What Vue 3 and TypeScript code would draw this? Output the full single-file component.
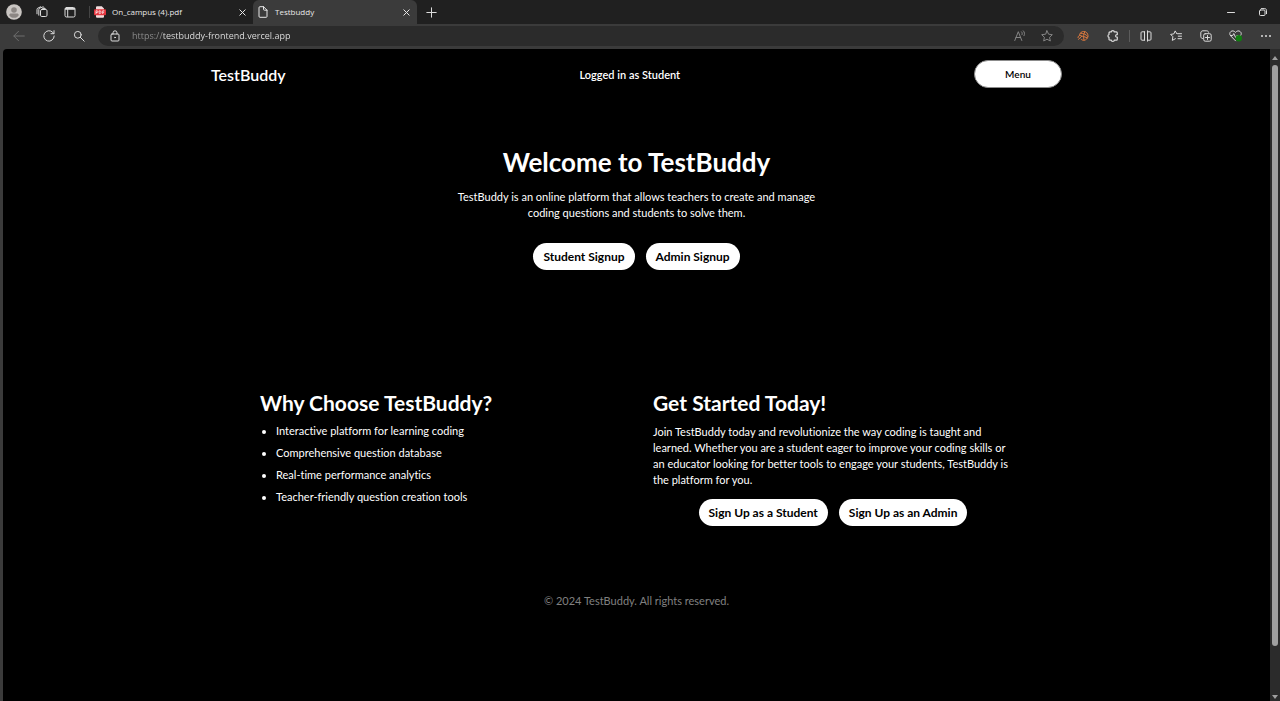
<script setup lang="ts">
import { ref } from 'vue'

const address = ref<string>('https://testbuddy-frontend.vercel.app')

const reasons: string[] = [
  'Interactive platform for learning coding',
  'Comprehensive question database',
  'Real-time performance analytics',
  'Teacher-friendly question creation tools',
]
</script>

<template>
  <div class="browser">
    <div class="tab-bar">
      <button class="tool" type="button" aria-label="Profile">
        <svg width="16" height="16" viewBox="0 0 16 16">
          <circle cx="8" cy="8" r="7.8" fill="#c9c5c2" />
          <circle cx="8" cy="6" r="2.8" fill="#8b8683" />
          <path d="M3.2 11.2c0-1.2.9-1.7 1.8-1.7h6c.9 0 1.8.5 1.8 1.7-.9 1.600-2.700 2.600-4.800 2.600s-3.900-1-4.800-2.600z" fill="#8b8683" />
        </svg>
      </button>
      <button class="tool" type="button" aria-label="Workspaces">
        <svg class="line" width="12" height="12" viewBox="0 0 12 12">
          <rect x="4.500" y="3.500" width="6.500" height="7" rx="1.300" />
          <path d="M6.300 3.500V2.600h3v.9M2.800 9.200V3.400c0-.8.500-1.300 1.300-1.400l3-1.200 1 .7M1 7.800V3.500c0-.8.400-1.300 1.100-1.500l2.600-1.200" />
        </svg>
      </button>
      <button class="tool" type="button" aria-label="Tab actions">
        <svg class="line" width="12" height="12" viewBox="0 0 12 12">
          <rect x="1" y="1.500" width="10" height="9.500" rx="1.500" />
          <path d="M1.500 2.500h9M1.500 3.300h9M3.700 3.500v7" />
        </svg>
      </button>
      <div class="tab tab-first">
        <svg width="12" height="12" viewBox="0 0 12 12">
          <path d="M2 4V1.200C2 .6 2.400.3 3 .3h4.800L10 2.500V4zM2 8h8v2.800c0 .6-.4.900-1 .9H3c-.6 0-1-.3-1-.9z" fill="#f2dcdd" />
          <rect x="0" y="3.300" width="12" height="6" rx="1" fill="#e5343d" />
          <path d="M2 8V4.800h1c1.300 0 1.300 1.700 0 1.700H2M5.200 4.800v2.800h.7c1.600 0 1.600-2.800 0-2.800zM8.700 8V4.800h1.700M8.700 6.300h1.400" fill="none" stroke="#fff" stroke-width=".7" />
        </svg>
        <span class="tab-title">On_campus (4).pdf</span>
        <button class="close" type="button" aria-label="Close On_campus (4).pdf">
          <svg class="line" width="7" height="7" viewBox="0 0 7 7"><path d="M.8.8l5.400 5.400M6.200.8L.8 6.200" /></svg>
        </button>
      </div>
      <div class="tab tab-active">
        <svg class="line" width="12" height="12" viewBox="0 0 12 12">
          <path d="M2 1.500C2 1 2.300.7 2.800.7H6.500L10 4.200v6.300c0 .5-.3.800-.8.800H2.800c-.5 0-.8-.3-.8-.8zM6.500.7v2.700c0 .5.300.8.800.8H10" />
        </svg>
        <span class="tab-title">Testbuddy</span>
        <button class="close" type="button" aria-label="Close Testbuddy">
          <svg class="line" width="7" height="7" viewBox="0 0 7 7"><path d="M.8.8l5.400 5.400M6.200.8L.8 6.200" /></svg>
        </button>
      </div>
      <button class="tool" type="button" aria-label="New tab">
        <svg class="line" width="11" height="11" viewBox="0 0 11 11"><path d="M5.500.8v9.400M.8 5.500h9.400" /></svg>
      </button>
      <div class="window-controls">
        <button class="tool" type="button" aria-label="Minimize">
          <svg class="line" width="8" height="8" viewBox="0 0 8 8"><path d="M.5 4.500h7" /></svg>
        </button>
        <button class="tool" type="button" aria-label="Restore">
          <svg class="line" width="8" height="8" viewBox="0 0 8 8">
            <rect x=".5" y="2" width="5.500" height="5.500" rx="1" />
            <path d="M2.300.6h3.400c1.100 0 1.800.7 1.800 1.800v3.300" />
          </svg>
        </button>
      </div>
    </div>

    <div class="toolbar">
      <button class="tool faint" type="button" aria-label="Back">
        <svg class="line" width="12" height="12" viewBox="0 0 12 12"><path d="M11.300 6H1M5.500 1.300L.8 6l4.700 4.700" /></svg>
      </button>
      <button class="tool" type="button" aria-label="Refresh">
        <svg class="line" width="12" height="12" viewBox="0 0 12 12"><path d="M11.200 6A5.200 5.200 0 1 1 9.800 2.400L10.800 3.500M11 .7v3H8" /></svg>
      </button>
      <button class="tool" type="button" aria-label="Search">
        <svg class="line" width="12" height="12" viewBox="0 0 12 12"><circle cx="4.800" cy="4.800" r="3.400" /><path d="M7.300 7.300l3.900 3.900" /></svg>
      </button>
      <div class="address-bar">
        <button class="tool site-info" type="button" aria-label="Site information">
          <svg class="line" width="12" height="12" viewBox="0 0 12 12">
            <rect x="2" y="4" width="8" height="7" rx="1" />
            <path d="M4 4V2.800a2 2 0 0 1 4 0V4" />
            <circle cx="6" cy="7.500" r=".4" />
          </svg>
        </button>
        <input v-model="address" class="address" type="text" aria-label="Address" spellcheck="false" />
        <button class="tool small dim" type="button" aria-label="Read aloud">
          <svg class="line" width="12" height="12" viewBox="0 0 12 12"><path d="M.8 10.500L4.300 1.700l3.500 8.800M2 7.500h4.600M7.500 1.800c.9.800.9 2 .5 2.900M9.300.8c1.500 1.400 1.500 3.400.7 4.900" /></svg>
        </button>
        <button class="tool small dim" type="button" aria-label="Add to favorites">
          <svg class="line" width="12" height="12" viewBox="0 0 12 12"><path d="M6 .8l1.600 3.400 3.700.5-2.700 2.600.7 3.700L6 9.200 2.700 11l.7-3.700L.7 4.700l3.700-.5z" /></svg>
        </button>
      </div>
      <button class="tool accent" type="button" aria-label="Extension">
        <svg class="line" width="12" height="12" viewBox="0 0 12 12">
          <path d="M2.500 5.200C2.700 3 4.500 1.500 6.700 1.500c2.500 0 4.300 1.900 4.300 4.300S9 10.300 6.800 10.300c-1.300 0-2.200-.4-2.900-1.200" />
          <path d="M3.500 3.200c3 .2 5.500 1 7.300 3.300M7.800 1.700C6.500 4 6.200 7 7 10.100M1 7.600c0-1.300.9-2.100 2-2.100 2.300.8 5 1.200 7.300 2.300M1.500 9.300l3.200-3" />
        </svg>
      </button>
      <button class="tool" type="button" aria-label="Extensions">
        <svg class="line heavy" width="12" height="12" viewBox="0 0 12 12"><path d="M4.300 1.900a1.500 1.200 0 0 1 3 0h2c.6 0 1 .4 1 1v1.700c-2.200-.4-2.200 3 0 2.600v2c0 .6-.4 1-1 1h-2a1.500 1.200 0 0 1-3 0H3c-.6 0-1-.4-1-1V7.400a1.400 1.500 0 0 1 0-2.900V2.900c0-.6.4-1 1-1z" /></svg>
      </button>
      <span class="divider"></span>
      <button class="tool" type="button" aria-label="Split screen">
        <svg class="line" width="12" height="12" viewBox="0 0 12 12"><path d="M4.500 1.800H2c-.6 0-1 .4-1 1v6.400c0 .6.400 1 1 1h2.500M7.500 1.800H10c.6 0 1 .4 1 1v6.400c0 .6-.4 1-1 1H7.500M4.500 1.800v8.400M7.500 .8v10.400" /></svg>
      </button>
      <button class="tool" type="button" aria-label="Favorites">
        <svg class="line" width="12" height="12" viewBox="0 0 12 12"><path d="M7.500 3.700h4M8.300 6.200h3.200M8 8.700h3.500M6.800 3.700L5.200.9 3.800 3.900.6 4.400l2.300 2.300-.6 3.700 3.100-1.700" /></svg>
      </button>
      <button class="tool" type="button" aria-label="Collections">
        <svg class="line" width="12" height="12" viewBox="0 0 12 12">
          <rect x="3.700" y="3.700" width="7.500" height="7.500" rx="1.500" />
          <path d="M7.500 5.500v4M5.500 7.500h4M2.500 8.500C1.300 8.300.8 7.500.8 6.700V3C.8 1.600 1.700.8 3 .8h3.700c1 0 1.700.5 1.900 1.500" />
        </svg>
      </button>
      <button class="tool" type="button" aria-label="Browser essentials">
        <svg class="line" width="14" height="12" viewBox="0 0 14 12">
          <path d="M6.500 10.800L1.800 6C.3 4.500.6 2.500 1.800 1.600c1.400-1.200 3.200-.9 4.700.8 1.500-1.700 3.300-2 4.700-.8 1.200.9 1.500 2.600.4 4M1.500 5.500h2.200l1.100-2 1.800 4 1.300-2h2" />
          <circle cx="9.800" cy="8.300" r="3.200" fill="#107c10" stroke="none" />
        </svg>
      </button>
      <button class="tool more" type="button" aria-label="Settings and more">
        <svg width="12" height="12" viewBox="0 0 12 12" fill="#dcdcdc">
          <circle cx="2" cy="6" r="1" /><circle cx="6" cy="6" r="1" /><circle cx="10" cy="6" r="1" />
        </svg>
      </button>
    </div>

    <div class="viewport">
      <div class="page">
        <header class="site-header">
          <span class="brand">TestBuddy</span>
          <span class="status">Logged in as Student</span>
          <button class="menu" type="button">Menu</button>
        </header>

        <main>
          <section class="hero">
            <h1>Welcome to TestBuddy</h1>
            <p>
              TestBuddy is an online platform that allows teachers to create and manage coding
              questions and students to solve them.
            </p>
            <div class="actions">
              <a class="pill" href="#student">Student Signup</a>
              <a class="pill" href="#admin">Admin Signup</a>
            </div>
          </section>

          <section class="features">
            <div class="feature">
              <h2>Why Choose TestBuddy?</h2>
              <ul>
                <li v-for="reason in reasons" :key="reason">{{ reason }}</li>
              </ul>
            </div>
            <div class="feature">
              <h2>Get Started Today!</h2>
              <p>
                Join TestBuddy today and revolutionize the way coding is taught and learned.
                Whether you are a student eager to improve your coding skills or an educator
                looking for better tools to engage your students, TestBuddy is the platform for
                you.
              </p>
              <div class="actions">
                <a class="pill" href="#student">Sign Up as a Student</a>
                <a class="pill" href="#admin">Sign Up as an Admin</a>
              </div>
            </div>
          </section>
        </main>

        <footer>© 2024 TestBuddy. All rights reserved.</footer>
      </div>

      <div class="scrollbar" aria-hidden="true">
        <svg width="6" height="4" viewBox="0 0 6 4"><path d="M3 0l3 4H0z" fill="#9f9f9f" /></svg>
        <span class="track"><span class="thumb"></span></span>
        <svg width="6" height="4" viewBox="0 0 6 4"><path d="M0 0h6L3 4z" fill="#9f9f9f" /></svg>
      </div>
    </div>
  </div>
</template>

<style>
body {
  margin: 0;
  background: #000;
}
</style>

<style scoped>
.browser {
  display: flex;
  flex-direction: column;
  height: 100vh;
  overflow: hidden;
  background: #3b3b3b;
  color: #fff;
  font-family: Lato, "Open Sans", sans-serif;
  font-size: 11px;
  font-variant-ligatures: none;
}

button,
input {
  margin: 0;
  padding: 0;
  border: 0;
  background: none;
  color: inherit;
  font: inherit;
}

svg {
  display: block;
  flex: none;
}

.line {
  fill: none;
  stroke: currentColor;
  stroke-width: 1;
  stroke-linecap: round;
  stroke-linejoin: round;
}

.heavy {
  stroke-width: 1.2;
}

.tool {
  display: flex;
  flex: none;
  align-items: center;
  justify-content: center;
  width: 30px;
  height: 20px;
  color: #dcdcdc;
}

.dim {
  color: #858585;
}

.faint {
  color: #6e6e6e;
}

.accent {
  color: #d9783f;
}

.more {
  width: 29px;
}

.tab-bar,
.toolbar {
  display: flex;
  align-items: center;
  box-sizing: border-box;
  font-family: "Open Sans", sans-serif;
}

.tab-bar {
  height: 24px;
  background: #202020;
}

.tab-bar .tool {
  width: 28px;
}

.tab {
  display: flex;
  align-items: center;
  gap: 6px;
  box-sizing: border-box;
  width: 164px;
  height: 24px;
  padding: 0 6px 0 4px;
  color: #e8e8e8;
  font-size: 8px;
  line-height: 10px;
}

.tab-first {
  height: 12px;
  margin-left: 5px;
  border-left: 1px solid #454545;
}

.tab-active {
  border-radius: 6px 6px 0 0;
  background: #3b3b3b;
}

.tab-title {
  flex: 1;
  white-space: nowrap;
}

.close {
  display: flex;
  align-items: center;
  justify-content: center;
  width: 9px;
  height: 12px;
}

.window-controls {
  display: flex;
  gap: 4px;
  margin-left: auto;
  padding-right: 3px;
}

.toolbar {
  height: 25px;
  padding: 0 0 1px 4px;
}

.address-bar {
  display: flex;
  flex: 1;
  align-items: center;
  height: 20px;
  margin: 0 4px;
  padding-right: 4px;
  border-radius: 10px;
  background: #2b2b2b;
}

.site-info {
  width: 34px;
}

.address {
  flex: 1;
  min-width: 0;
  background: linear-gradient(90deg, #8f8f8f 31px, #e8e8e8 31px);
  background-clip: text;
  color: transparent;
  font-size: 9px;
  line-height: 20px;
}

.small {
  width: 27px;
}

.divider {
  width: 1px;
  height: 12px;
  margin: 0 1px;
  background: #5c5c5c;
}

.viewport {
  display: flex;
  flex: 1;
  min-height: 0;
  padding-left: 3px;
}

.page {
  flex: 1;
  overflow: hidden;
  border-radius: 4px 0 0 0;
  background: #000;
}

.site-header {
  display: flex;
  align-items: center;
  justify-content: space-between;
  box-sizing: border-box;
  max-width: 851px;
  height: 50px;
  margin: 0 auto;
}

.brand {
  font-size: 16px;
  font-weight: 600;
}

.status {
  font-weight: 600;
}

.menu {
  width: 88px;
  height: 28px;
  border: 1px solid #8c8c8c;
  border-radius: 14px;
  background: #fff;
  color: #000;
  font-size: 10px;
  font-weight: 600;
}

.hero {
  max-width: 380px;
  margin: 0 auto;
  padding-top: 47px;
  text-align: center;
}

h1,
h2,
p,
ul {
  margin: 0;
}

h1 {
  font-size: 26px;
  line-height: 32px;
  white-space: nowrap;
}

h2 {
  font-size: 21px;
  line-height: 32px;
}

p {
  line-height: 16px;
}

.hero p {
  margin-top: 11px;
}

.actions {
  display: flex;
  justify-content: center;
  gap: 11px;
}

.hero .actions {
  margin-top: 22px;
}

.pill {
  padding: 0 10px;
  border-radius: 14px;
  background: #fff;
  color: #000;
  font-size: 12px;
  font-weight: 700;
  line-height: 27px;
  text-decoration: none;
  white-space: nowrap;
}

.features {
  display: grid;
  grid-template-columns: 1fr 1fr;
  gap: 33px;
  max-width: 753px;
  margin: 117px auto 0;
}

ul {
  display: grid;
  gap: 6px;
  padding: 4px 0 0 16px;
}

li {
  line-height: 16px;
}

.feature p {
  padding-top: 5px;
}

.feature .actions {
  margin-top: 11px;
}

footer {
  margin-top: 67px;
  color: #808080;
  line-height: 16px;
  text-align: center;
}

.scrollbar {
  display: flex;
  flex-direction: column;
  align-items: center;
  gap: 5px;
  width: 10px;
  padding: 7px 0 2px;
  box-sizing: border-box;
  background: #2b2b2b;
}

.track {
  flex: 1;
  width: 6px;
}

.thumb {
  display: block;
  height: 93%;
  border-radius: 3px;
  background: #9f9f9f;
}
</style>
